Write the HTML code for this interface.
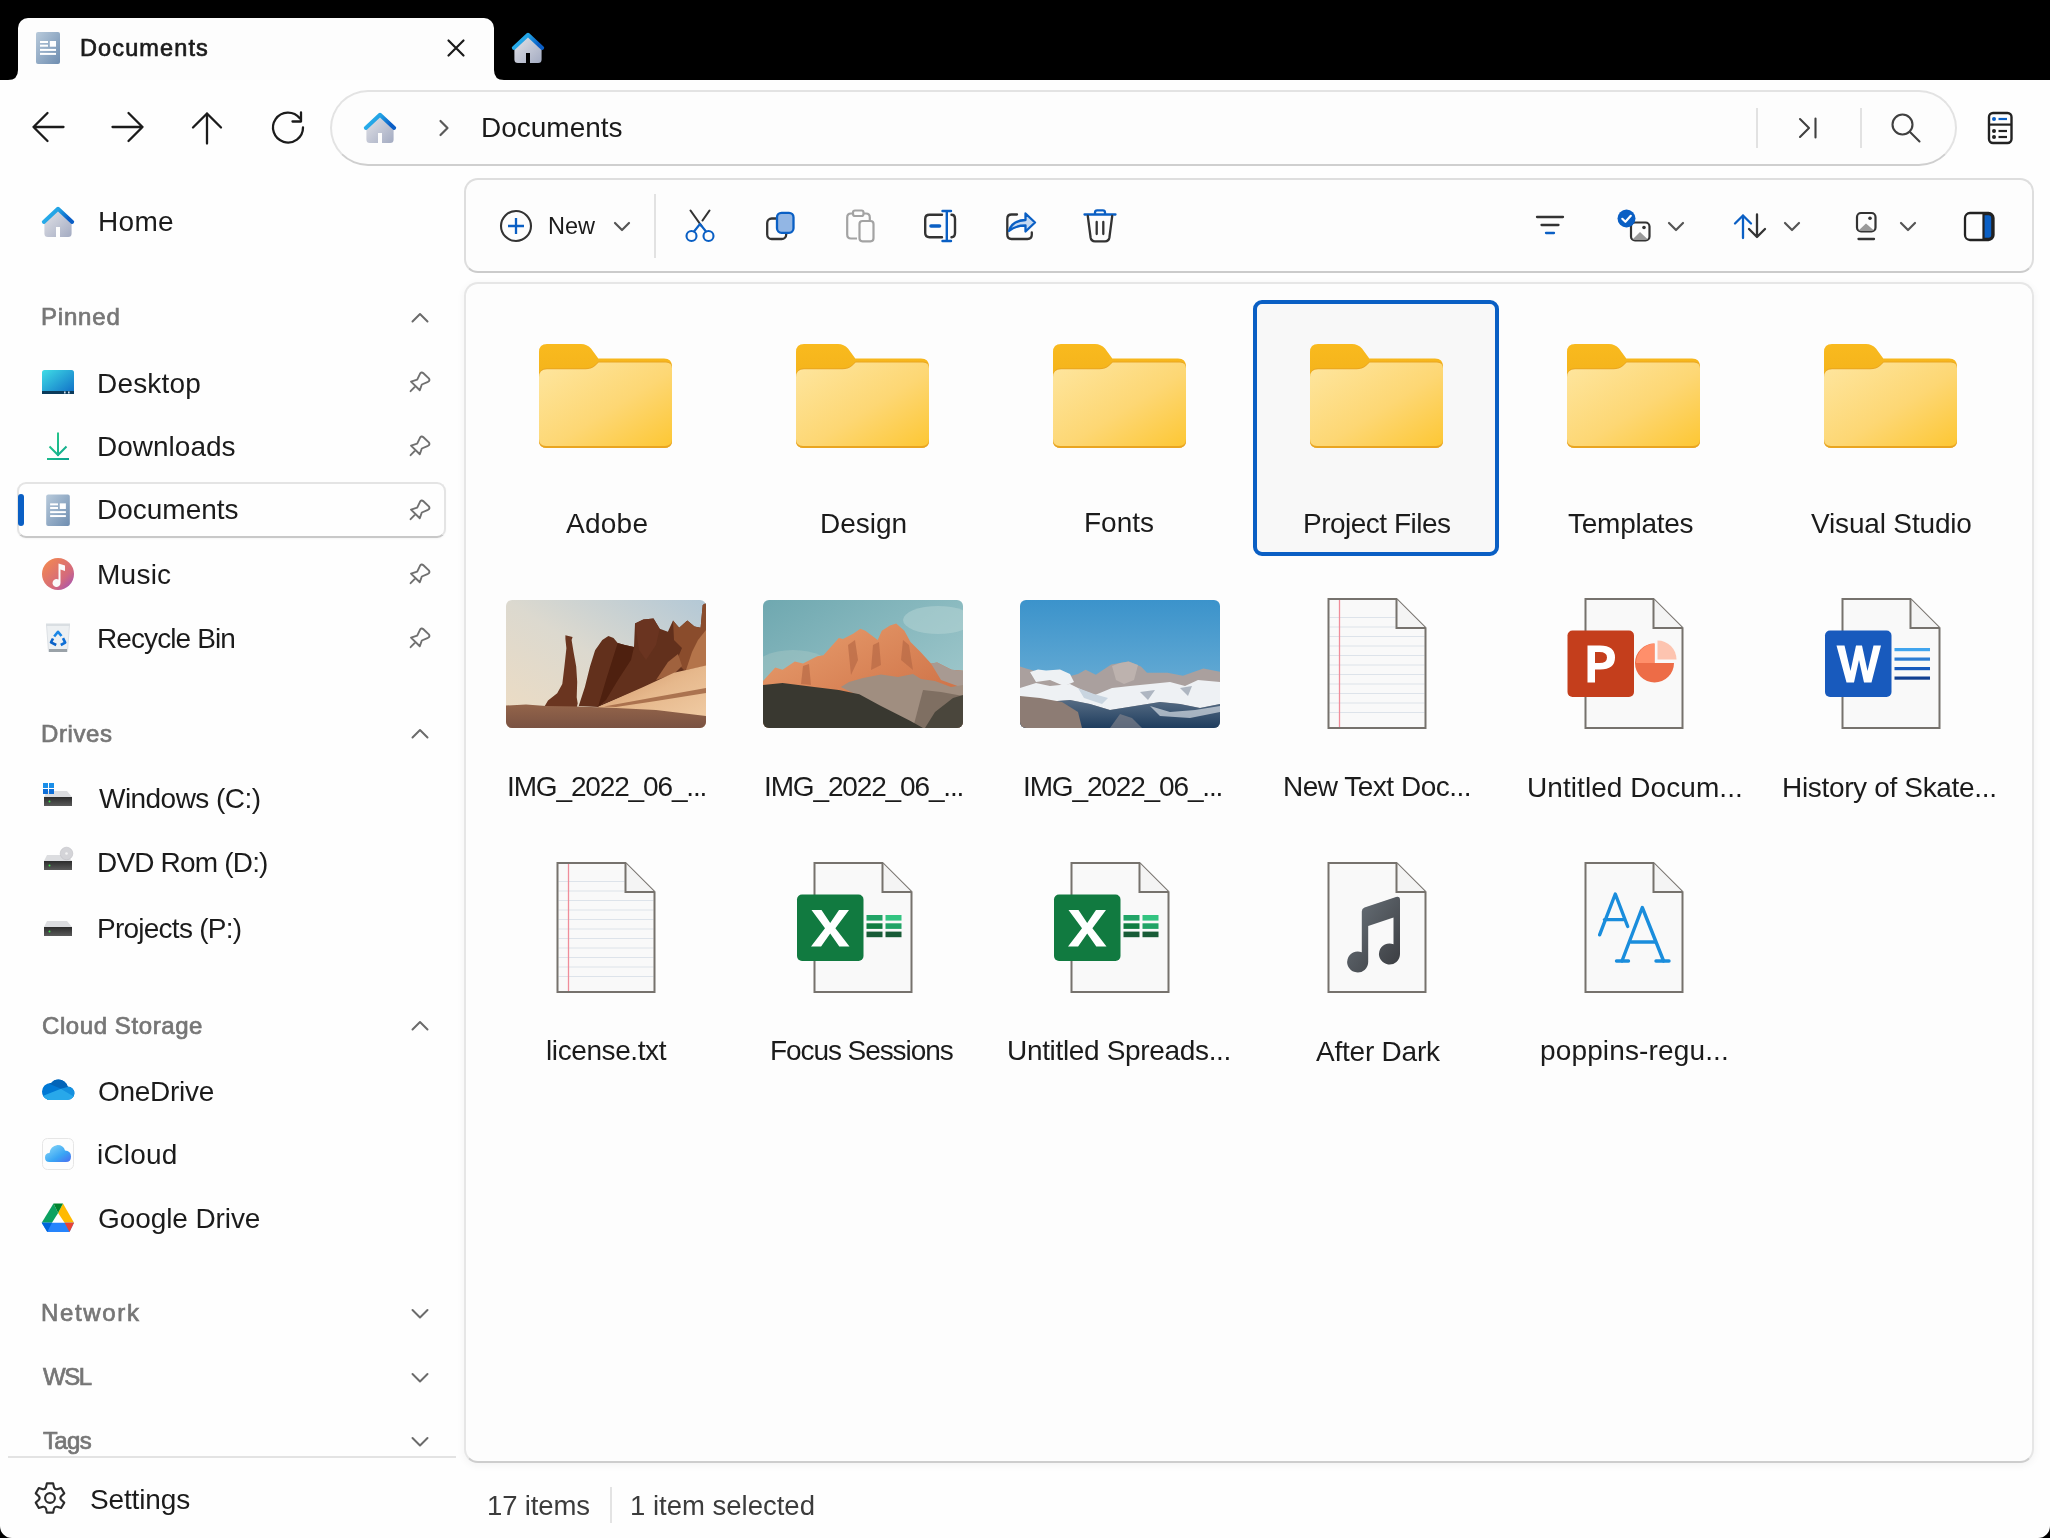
<!DOCTYPE html>
<html><head><meta charset="utf-8">
<style>
*{margin:0;padding:0;box-sizing:border-box}
html,body{width:2050px;height:1538px;overflow:hidden}
body{background:#fefefe;font-family:"Liberation Sans",sans-serif;color:#1b1b1b;position:relative}
.a{position:absolute}
.t{position:absolute;line-height:1;white-space:nowrap;will-change:transform}
svg{position:absolute;overflow:visible}
#topbar{left:0;top:0;width:2050px;height:80px;background:#000}
#tab{left:18px;top:18px;width:476px;height:62px;background:#fdfdfd;border-radius:10px 10px 0 0}
.addr{left:330px;top:90px;width:1627px;height:76px;border-radius:38px;border:2px solid #e3e3e3;border-bottom-color:#cfcfcf;background:#fdfdfd}
.panel{border:2px solid #dedede;border-bottom-color:#cbcbcb;background:#fdfdfd}
#toolbar{left:464px;top:178px;width:1570px;height:95px;border-radius:14px}
#content{left:464px;top:282px;width:1570px;height:1181px;border-radius:14px;border-color:#e6e6e6;border-bottom-color:#cdcdcd;box-shadow:0 2px 8px rgba(0,0,0,0.05)}
.hdr{color:#7a7a7a;font-weight:bold;font-size:23px}
.sb{font-size:27px;color:#1b1b1b}
.lbl{font-size:27px;color:#1b1b1b;text-align:center;width:246px}
.sel{left:1253px;top:300px;width:246px;height:256px;border:4px solid #0a5fc4;border-radius:9px;background:#f8f8f8}
.vsep{width:2px;background:#e3e3e3}
</style></head><body>
<div id="topbar" class="a"></div>
<div id="tab" class="a"></div>
<!-- inverted corners -->
<svg style="left:8px;top:70px" width="10" height="10"><path d="M10,0 V10 H0 Q10,10 10,0Z" fill="#fdfdfd"/></svg>
<svg style="left:494px;top:70px" width="10" height="10"><path d="M0,0 V10 H10 Q0,10 0,0Z" fill="#fdfdfd"/></svg>


<div class="a addr"></div>

<div id="toolbar" class="a panel"></div>

<div id="content" class="a panel"></div>
<div class="a sel"></div>

<!-- sidebar -->
<div class="a" style="left:16.5px;top:482px;width:429px;height:56px;border-radius:9px;border:2px solid #e4e4e4;border-bottom-color:#c8c8c8;background:#fefefe;box-shadow:0 1px 2px rgba(0,0,0,0.04)"></div>
<div class="a" style="left:18px;top:494px;width:6px;height:32px;border-radius:3px;background:#0a5fc4"></div>
<div class="a" style="left:8px;top:1456px;width:448px;height:2px;background:#e3e3e3"></div>

<!-- status -->
<div class="a vsep" style="left:610px;top:1487px;height:36px"></div>

<!-- grid labels -->


<svg id="ov" style="left:0;top:0" width="2050" height="1538" viewBox="0 0 2050 1538">
<defs>
 <linearGradient id="gDoc" x1="0" y1="0" x2="1" y2="1"><stop offset="0" stop-color="#b8cadb"/><stop offset="1" stop-color="#6e8db0"/></linearGradient>
 <linearGradient id="gRoof" x1="0" y1="0" x2="1" y2="0.3"><stop offset="0" stop-color="#2db4ee"/><stop offset="0.5" stop-color="#22a2e4"/><stop offset="1" stop-color="#0a5ec6"/></linearGradient>
 <linearGradient id="gHouse" x1="0" y1="0" x2="1" y2="1"><stop offset="0" stop-color="#e4e4e8"/><stop offset="1" stop-color="#a3abc2"/></linearGradient>
 <symbol id="home" viewBox="0 0 32 30" overflow="visible">
  <path d="M2.4,15.5 L16,3 L29.6,15.5 V26.5 Q29.6,30 26.1,30 H18 V20 H14 V30 H5.9 Q2.4,30 2.4,26.5 Z" fill="url(#gHouse)"/>
  <path d="M1.8,15 L16,1.8 L30.2,15" fill="none" stroke="url(#gRoof)" stroke-width="3.9" stroke-linecap="round" stroke-linejoin="round"/>
 </symbol>
 <symbol id="docico" viewBox="0 0 24 32" overflow="visible">
  <rect x="0" y="0" width="24" height="32" rx="2" fill="url(#gDoc)"/>
  <g fill="#fff"><rect x="4" y="9" width="8" height="2"/><rect x="4" y="12.7" width="8" height="2"/><rect x="13.8" y="9" width="6.2" height="5.7"/><rect x="4" y="16.9" width="16" height="2"/><rect x="4" y="20.9" width="16" height="2"/></g>
 </symbol>
 <symbol id="pin" viewBox="0 0 20 20" overflow="visible">
  <path d="M1,9.6 L7.2,7.6 L10,1.8 Q11.4,-0.6 13.4,1.2 L18.8,6.4 Q20.4,8.4 18,9.8 L11.8,12.5 L9.8,18.3 Z M5.3,14.4 L0.6,19.2" fill="none" stroke="#707070" stroke-width="1.9" stroke-linejoin="round" stroke-linecap="round"/>
 </symbol>
</defs>
<!-- tab -->
<use href="#docico" x="36" y="32" width="24" height="32"/>
<path d="M448.5,40.5 L463.5,55.5 M463.5,40.5 L448.5,55.5" stroke="#1b1b1b" stroke-width="2.2" stroke-linecap="round"/>
<use href="#home" x="512" y="33" width="32" height="30"/>
<!-- nav -->
<g fill="none" stroke="#1b1b1b" stroke-width="2.3" stroke-linecap="round" stroke-linejoin="round">
 <path d="M33.5,127 H63.5 M47.5,113 L33.5,127 L47.5,141"/>
 <path d="M112.5,127 H142.5 M128.5,113 L142.5,127 L128.5,141"/>
 <path d="M207,113.5 V143.5 M193,127.5 L207,113.5 L221,127.5"/>
 <path d="M303,127.5 A15,15 0 1 1 299.8,118.3 M301,112.5 V121.5 H292.5"/>
</g>
<!-- address -->
<use href="#home" x="364" y="113" width="32" height="30"/>
<path d="M440.5,121 L447.5,128 L440.5,135" fill="none" stroke="#5a5a5a" stroke-width="2.2" stroke-linecap="round" stroke-linejoin="round"/>
<rect x="1756" y="108" width="2" height="40" fill="#e2e2e2"/>
<rect x="1860" y="108" width="2" height="40" fill="#e2e2e2"/>
<g fill="none" stroke="#404040" stroke-width="2.1" stroke-linecap="round" stroke-linejoin="round">
 <path d="M1800,119 L1809,128 L1800,137 M1815.5,118.5 V137.5"/>
 <circle cx="1902.5" cy="124.5" r="10"/>
 <path d="M1910,132 L1919.5,141.5"/>
</g>
<g>
 <rect x="1989" y="113" width="22.5" height="30" rx="4" fill="none" stroke="#222" stroke-width="2.4"/>
 <path d="M1989,124.6 H2011.5" stroke="#222" stroke-width="2.2"/>
 <circle cx="1994" cy="119" r="2" fill="#0a5fc4"/><path d="M1998.5,119 H2007" stroke="#0a5fc4" stroke-width="2.2"/>
 <circle cx="1994" cy="131" r="2" fill="#222"/><path d="M1998.5,131 H2007" stroke="#222" stroke-width="2.2"/>
 <circle cx="1994" cy="137" r="2" fill="#222"/><path d="M1998.5,137 H2007" stroke="#222" stroke-width="2.2"/>
</g>
<!-- toolbar -->
<circle cx="516" cy="226" r="15" fill="none" stroke="#333" stroke-width="2.1"/>
<path d="M516,218 V234 M508,226 H524" stroke="#0a5fc4" stroke-width="2.3"/>
<g fill="none" stroke="#555" stroke-width="2.2" stroke-linecap="round" stroke-linejoin="round">
 <path d="M615,223 L622,230 L629,223"/>
 <path d="M1669,223 L1676,230 L1683,223"/>
 <path d="M1785,223 L1792,230 L1799,223"/>
 <path d="M1901,223 L1908,230 L1915,223"/>
</g>
<rect x="654" y="194" width="2" height="64" fill="#e2e2e2"/>
<!-- scissors -->
<g fill="none" stroke-width="2.1" stroke-linecap="round">
 <path d="M690.5,210.5 L701.5,226" stroke="#333"/>
 <path d="M709.5,210.5 L702.5,220.5" stroke="#333"/>
 <path d="M700,224 L706,231.5 M700,224 L694,231.5" stroke="#0a5fc4"/>
 <circle cx="691.5" cy="236" r="5" stroke="#0a5fc4"/>
 <circle cx="708.5" cy="236" r="5" stroke="#0a5fc4"/>
</g>
<!-- copy -->
<rect x="767.2" y="218.5" width="19" height="20.5" rx="4.5" fill="none" stroke="#333" stroke-width="2.3"/>
<rect x="777" y="212.8" width="16.5" height="20" rx="4.5" fill="#92b6e4" stroke="#0a5fc4" stroke-width="2.3"/>
<!-- paste -->
<g fill="none" stroke="#a3a3a3" stroke-width="2.2" stroke-linejoin="round">
 <path d="M857,238.5 H851 Q847.2,238.5 847.2,234.5 V217.5 Q847.2,213.5 851,213.5 H853 M863.5,213.5 H866 Q869.8,213.5 869.8,217.5 V220.5"/>
 <rect x="853" y="210.5" width="10.5" height="5.5" rx="2"/>
 <rect x="859.5" y="221" width="14" height="20.3" rx="3"/>
</g>
<!-- rename -->
<g fill="none" stroke-width="2.4" stroke-linecap="round">
 <path d="M942,214.8 H929.5 Q925.2,214.8 925.2,219 V233 Q925.2,237.2 929.5,237.2 H942 M951.5,214.8 Q955,214.8 955,219 V233 Q955,237.2 951.5,237.2" stroke="#333"/>
 <path d="M946.8,211 V241 M942.5,211 H951 M942.5,241 H951" stroke="#0a5fc4"/>
 <path d="M931,226 H939.5" stroke="#0a5fc4" stroke-width="3.6"/>
</g>
<!-- share -->
<g fill="none" stroke-width="2.3" stroke-linejoin="round" stroke-linecap="round">
 <path d="M1017,214.5 H1011.5 Q1007.3,214.5 1007.3,218.8 V234.8 Q1007.3,239 1011.5,239 H1027.5 Q1031.8,239 1031.8,234.8 V232.5" stroke="#333"/>
 <path d="M1009,231 Q1012,220.5 1025.5,220 V213.5 L1035,222.5 L1025.5,231.5 V225.5 Q1015,225.5 1009,231 Z" fill="#c6d9f1" stroke="#0a5fc4"/>
</g>
<!-- delete -->
<g fill="none" stroke-width="2.3" stroke-linecap="round" stroke-linejoin="round">
 <path d="M1084.5,214.5 H1115.5 M1095,214 V212.5 Q1095,210.3 1097.2,210.3 H1102.8 Q1105,210.3 1105,212.5 V214" stroke="#0a5fc4"/>
 <path d="M1087.8,216 L1090.6,237.5 Q1091.2,241.3 1095,241.3 H1105 Q1108.8,241.3 1109.4,237.5 L1112.2,216 M1096.7,222 V234 M1103.3,222 V234" stroke="#333"/>
</g>
<!-- filter -->
<g stroke-width="2.3" stroke-linecap="round">
 <path d="M1537,217 H1563 M1541.5,225 H1558.5" stroke="#333"/>
 <path d="M1546,233 H1554" stroke="#0a5fc4"/>
</g>
<!-- select -->
<g>
 <rect x="1631" y="222.5" width="18.5" height="18" rx="4" fill="#fdfdfd" stroke="#333" stroke-width="2.2"/>
 <path d="M1632.5,239.5 L1640,232 L1648,239.5 Z" fill="#9a9a9a"/>
 <circle cx="1644" cy="227.5" r="1.8" fill="#333"/>
 <circle cx="1626.5" cy="218.5" r="9" fill="#0a5fc4"/>
 <path d="M1622.3,218.8 L1625.4,221.8 L1630.8,215.8" fill="none" stroke="#fff" stroke-width="2.2" stroke-linecap="round" stroke-linejoin="round"/>
</g>
<!-- sort -->
<g fill="none" stroke-width="2.3" stroke-linecap="round" stroke-linejoin="round">
 <path d="M1743,238 V215.5 M1735,223.5 L1743,215.5 L1751,223.5" stroke="#0a5fc4"/>
 <path d="M1757,214.5 V237 M1749,229 L1757,237 L1765,229" stroke="#333"/>
</g>
<!-- layout -->
<g>
 <rect x="1857" y="213" width="18.5" height="18.5" rx="4" fill="none" stroke="#333" stroke-width="2.2"/>
 <path d="M1858.5,230.5 L1866,223.5 L1874,230.5 Z" fill="#9a9a9a"/>
 <circle cx="1870" cy="218.2" r="1.8" fill="#333"/>
 <path d="M1858.5,239 H1874" stroke="#333" stroke-width="2.3" stroke-linecap="round"/>
</g>
<!-- pane -->
<g>
 <rect x="1965" y="213" width="28.5" height="27" rx="5" fill="none" stroke="#222" stroke-width="2.3"/>
 <path d="M1983.5,214.2 H1988.5 Q1992.3,214.2 1992.3,218 V235 Q1992.3,238.8 1988.5,238.8 H1983.5 Z" fill="#0a5fc4" stroke="#222" stroke-width="2.2"/>
</g>
</svg>


<svg id="side" style="left:0;top:0" width="2050" height="1538" viewBox="0 0 2050 1538">
<defs>
 <linearGradient id="gDesk" x1="0" y1="0" x2="1" y2="1"><stop offset="0" stop-color="#3fdde6"/><stop offset="1" stop-color="#0f6cc6"/></linearGradient>
 <linearGradient id="gDl" x1="0" y1="0" x2="1" y2="1"><stop offset="0" stop-color="#2fd08a"/><stop offset="1" stop-color="#0aa38e"/></linearGradient>
 <linearGradient id="gMus" x1="0" y1="0" x2="1" y2="1"><stop offset="0" stop-color="#f78c4a"/><stop offset="0.65" stop-color="#d46a7c"/><stop offset="1" stop-color="#9a4fc0"/></linearGradient>
 <linearGradient id="gDrive" x1="0" y1="0" x2="0" y2="1"><stop offset="0" stop-color="#2c2c2c"/><stop offset="1" stop-color="#5a5a5a"/></linearGradient>
 <linearGradient id="gICl" x1="0" y1="0" x2="1" y2="1"><stop offset="0" stop-color="#8fdcf8"/><stop offset="0.6" stop-color="#3aa6f4"/><stop offset="1" stop-color="#4a6cf0"/></linearGradient>
</defs>
<use href="#home" x="42" y="207" width="32" height="30"/>
<!-- chevrons up -->
<g fill="none" stroke="#6b6b6b" stroke-width="2" stroke-linecap="round" stroke-linejoin="round">
 <path d="M412.5,321.5 L420,314 L427.5,321.5"/>
 <path d="M412.5,737.5 L420,730 L427.5,737.5"/>
 <path d="M412.5,1029.5 L420,1022 L427.5,1029.5"/>
 <path d="M412.5,1310 L420,1317.5 L427.5,1310"/>
 <path d="M412.5,1374 L420,1381.5 L427.5,1374"/>
 <path d="M412.5,1438 L420,1445.5 L427.5,1438"/>
</g>
<!-- pins -->
<use href="#pin" x="410" y="372" width="20" height="20"/>
<use href="#pin" x="410" y="436" width="20" height="20"/>
<use href="#pin" x="410" y="500" width="20" height="20"/>
<use href="#pin" x="410" y="564" width="20" height="20"/>
<use href="#pin" x="410" y="628" width="20" height="20"/>
<!-- desktop -->
<rect x="42" y="370" width="32" height="24" rx="2.5" fill="url(#gDesk)"/>
<rect x="42" y="391" width="32" height="3" fill="#0b3a5a"/>
<rect x="64" y="391.5" width="1.6" height="2" fill="#cde"/><rect x="68" y="391.5" width="1.6" height="2" fill="#cde"/>
<!-- downloads -->
<path d="M58,432.5 V456 M49.5,446.5 L58,455 L66.5,446.5 M47,459 H69" fill="none" stroke="url(#gDl)" stroke-width="2"/>
<!-- documents -->
<use href="#docico" x="46" y="494.5" width="24" height="31.5"/>
<!-- music -->
<circle cx="58" cy="574" r="16" fill="url(#gMus)"/>
<path d="M58.5,563.5 L65,565.5 V571 L60.5,569.5 V583 A4,4 0 1 1 58.5,579.6 Z" fill="#fafafa"/>
<!-- recycle -->
<path d="M46.5,625 H69.5 L67.5,651.5 H48.5 Z" fill="#edf0f2" stroke="#d5dbdf" stroke-width="0.8"/><path d="M46,623.5 H70 V626 H46 Z" fill="#d9dee2"/>
<rect x="49" y="649" width="18" height="3" fill="#9aa2a8"/>
<path d="M54.2,636.5 L58,631.8 L61.5,636" fill="none" stroke="#1a86e6" stroke-width="2.6" stroke-linejoin="round"/>
<path d="M63,638.2 L65.2,642.6 L60.8,645" fill="none" stroke="#0f6fd6" stroke-width="2.6" stroke-linejoin="round"/>
<path d="M56.2,645 L51,642.4 L53,638.5" fill="none" stroke="#0b62c8" stroke-width="2.6" stroke-linejoin="round"/>
<!-- drives -->
<g>
 <path d="M47,791 H67 L72,797 H44 Z" fill="#dcdde0"/>
 <rect x="44" y="797" width="28" height="9" fill="url(#gDrive)"/>
 <circle cx="49.5" cy="801.5" r="1" fill="#3de04a"/>
 <rect x="43" y="783" width="5" height="5" fill="#1a8ee8"/><rect x="49" y="783" width="5" height="5" fill="#1a8ee8"/>
 <rect x="43" y="789" width="5" height="5" fill="#0f6fd8"/><rect x="49" y="789" width="5" height="5" fill="#0f6fd8"/>
</g>
<g>
 <path d="M47,855 H67 L72,861 H44 Z" fill="#dcdde0"/>
 <rect x="44" y="861" width="28" height="9" fill="url(#gDrive)"/>
 <circle cx="49.5" cy="865.5" r="1" fill="#3de04a"/>
 <circle cx="66.5" cy="853.5" r="6.3" fill="#d4d4d8" stroke="#c0c0c4" stroke-width="0.6"/><circle cx="66.5" cy="853.5" r="1.3" fill="#f4f4f4"/>
</g>
<g>
 <path d="M47,921 H67 L72,927 H44 Z" fill="#dcdde0"/>
 <rect x="44" y="927" width="28" height="9" fill="url(#gDrive)"/>
 <circle cx="49.5" cy="931.5" r="1" fill="#3de04a"/>
</g>
<!-- onedrive -->
<defs><clipPath id="cpOD"><circle cx="50.6" cy="1091.5" r="8.6"/><circle cx="58.5" cy="1089" r="9.5"/><circle cx="67.8" cy="1093.2" r="6.6"/><rect x="47" y="1092" width="21" height="8"/></clipPath></defs>
<g clip-path="url(#cpOD)">
 <rect x="40" y="1076" width="36" height="26" fill="#0078d4"/>
 <path d="M49.8,1084 L61,1088.7 L67.8,1086.9 V1074 H45 Z" fill="#0364b8"/>
 <path d="M61,1088.7 L67.8,1086.9 L80,1085 V1097 L72.5,1096.3 Z" fill="#1490df"/>
 <path d="M36,1098.5 L61,1088.7 L78,1099 V1104 H36 Z" fill="#28a8ea"/>
</g>
<!-- icloud -->
<rect x="42.5" y="1138.5" width="31" height="31" rx="5" fill="#fdfdfd" stroke="#e6e6e6" stroke-width="1"/>
<path d="M49.5,1162 Q45,1162 45,1157.5 Q45,1153 49.5,1153 Q50.5,1146 57.5,1145 Q63.5,1145 65,1150.5 Q71,1151 71,1156.5 Q71,1162 66,1162 Z" fill="url(#gICl)"/>
<!-- gdrive -->
<path d="M53.5,1203.5 L58.1,1213 L52,1222.7 H41.7 Z" fill="#0ba160"/>
<path d="M63,1203.5 L74,1222.7 H64.6 L58.1,1213 Z" fill="#ffba00"/>
<path d="M53.5,1203.5 H63 L58.1,1213 Z" fill="#00832d"/>
<path d="M41.7,1222.7 H74 L69.5,1231.9 H47.3 Z" fill="#2684fc"/>
<path d="M41.7,1222.7 H52 L47.3,1231.9 Z" fill="#0066da"/>
<path d="M64.6,1222.7 H74 L69.5,1231.9 Z" fill="#ea4335"/>
<!-- settings gear -->
<g>
 <path d="M45.95,1487.45 L46.88,1483.33 L53.12,1483.33 L54.05,1487.45 Q54.80,1489.69 57.11,1489.22 L61.15,1487.96 L64.27,1493.36 L61.16,1496.23 Q59.60,1498.00 61.16,1499.77 L64.27,1502.64 L61.15,1508.04 L57.11,1506.78 Q54.80,1506.31 54.05,1508.55 L53.12,1512.67 L46.88,1512.67 L45.95,1508.55 Q45.20,1506.31 42.89,1506.78 L38.85,1508.04 L35.73,1502.64 L38.84,1499.77 Q40.40,1498.00 38.84,1496.23 L35.73,1493.36 L38.85,1487.96 L42.89,1489.22 Q45.20,1489.69 45.95,1487.45 Z" fill="none" stroke="#2b2b2b" stroke-width="2.1" stroke-linejoin="round"/>
 <circle cx="50" cy="1498" r="4.9" fill="none" stroke="#2b2b2b" stroke-width="2.1"/>
</g>
</svg>


<svg id="grid" style="left:0;top:0" width="2050" height="1538" viewBox="0 0 2050 1538">
<defs>
 <linearGradient id="gFB" x1="0" y1="0" x2="0" y2="1"><stop offset="0" stop-color="#f9ba1e"/><stop offset="1" stop-color="#e9a416"/></linearGradient>
 <linearGradient id="gFF" x1="0" y1="0" x2="1" y2="1"><stop offset="0" stop-color="#fee6a0"/><stop offset="0.55" stop-color="#fdd774"/><stop offset="1" stop-color="#fdc734"/></linearGradient>
 <symbol id="folder" viewBox="0 0 133 104" overflow="visible">
  <path d="M0,8 Q0,0 8,0 H42 Q48,0 52,4.5 L59.3,14.4 H125 Q133,14.4 133,22.4 V96 Q133,104 125,104 H8 Q0,104 0,96 Z" fill="url(#gFB)"/>
  <path d="M0,32.2 Q0,24.2 8,24.2 H46.6 Q52,24.2 56,21 L59.6,17.6 H127 Q133,17.6 133,23.6 V96.5 Q133,104 125.5,104 H7.5 Q0,104 0,96.5 Z" fill="#e9a521"/>
  <path d="M0,33.2 Q0,25.2 8,25.2 H46.6 Q52,25.2 56,22 L59.6,18.6 H127 Q133,18.6 133,24.6 V95 Q133,102 126,102 H7 Q0,102 0,95 Z" fill="url(#gFF)"/>
 </symbol>
 <symbol id="page" viewBox="0 0 99 131" overflow="visible">
  <path d="M1,1 H69 L98,30 V130 H1 Z" fill="#f9f9f9" stroke="#76726d" stroke-width="2"/>
  <path d="M69,1 V30 H98" fill="#f4f4f4" stroke="#76726d" stroke-width="2" stroke-linejoin="miter"/>
 </symbol>
 <symbol id="txtpage" viewBox="0 0 99 131" overflow="visible">
  <path d="M1,1 H69 L98,30 V130 H1 Z" fill="#f9f9f9"/>
  <g stroke="#dde3ea" stroke-width="1.2">
   <path d="M2,19.5 H68 M2,29 H68 M2,38.5 H97 M2,48 H97 M2,57.5 H97 M2,67 H97 M2,76.5 H97 M2,86 H97 M2,95.5 H97 M2,105 H97 M2,114.5 H97"/>
  </g>
  <path d="M12,2 V129" stroke="#ef8d9a" stroke-width="1.3"/>
  <path d="M1,1 H69 L98,30 V130 H1 Z" fill="none" stroke="#76726d" stroke-width="2"/>
  <path d="M69,1 V30 H98" fill="#f4f4f4" stroke="#76726d" stroke-width="2"/>
 </symbol>
 <symbol id="xls" viewBox="0 0 116 131" overflow="visible">
  <use href="#page" x="16.5" y="0" width="99" height="131"/>
  <rect x="0" y="32.5" width="66.5" height="66.5" rx="5" fill="#117a40"/>
  <path d="M14.5,48 H24.5 L33.2,61 L42,48 H52 L38.4,66.2 L52.5,84.5 H42.3 L33.2,71.4 L24.1,84.5 H14 L28,66.2 Z" fill="#fff"/>
  <rect x="69.5" y="53" width="16" height="5.6" fill="#21a366"/><rect x="88.5" y="53" width="16" height="5.6" fill="#33c481"/>
  <rect x="69.5" y="61.3" width="16" height="5.6" fill="#107c41"/><rect x="88.5" y="61.3" width="16" height="5.6" fill="#21a366"/>
  <rect x="69.5" y="69.6" width="16" height="5.6" fill="#185c37"/><rect x="88.5" y="69.6" width="16" height="5.6" fill="#185c37"/>
 </symbol>
</defs>
<use href="#folder" x="539" y="344" width="133" height="104"/>
<use href="#folder" x="796" y="344" width="133" height="104"/>
<use href="#folder" x="1053" y="344" width="133" height="104"/>
<use href="#folder" x="1310" y="344" width="133" height="104"/>
<use href="#folder" x="1567" y="344" width="133" height="104"/>
<use href="#folder" x="1824" y="344" width="133" height="104"/>

<!-- photos -->
<defs>
 <clipPath id="cp1"><rect x="0" y="0" width="200" height="128" rx="6"/></clipPath>
 <linearGradient id="gSky1" x1="0" y1="1" x2="1" y2="0"><stop offset="0" stop-color="#eedcc2"/><stop offset="0.5" stop-color="#dcd9cf"/><stop offset="1" stop-color="#b3c8d6"/></linearGradient>
 <linearGradient id="gRock1" x1="0" y1="0" x2="1" y2="0"><stop offset="0" stop-color="#5a2616"/><stop offset="0.6" stop-color="#63301c"/><stop offset="1" stop-color="#9a5a36"/></linearGradient>
 <linearGradient id="gSand1" x1="0" y1="0" x2="1" y2="1"><stop offset="0" stop-color="#c8885a"/><stop offset="0.5" stop-color="#e6b88c"/><stop offset="1" stop-color="#f2cfa8"/></linearGradient>
 <linearGradient id="gGround1" x1="0" y1="0" x2="0" y2="1"><stop offset="0" stop-color="#93644a"/><stop offset="1" stop-color="#7a5242"/></linearGradient>
 <linearGradient id="gSky2" x1="0" y1="0" x2="1" y2="1"><stop offset="0" stop-color="#6fa8b0"/><stop offset="1" stop-color="#a7cdd0"/></linearGradient>
 <linearGradient id="gOr2" x1="0" y1="0" x2="1" y2="1"><stop offset="0" stop-color="#e9a070"/><stop offset="1" stop-color="#c9683e"/></linearGradient>
 <linearGradient id="gSky3" x1="0" y1="0" x2="0" y2="1"><stop offset="0" stop-color="#3b93cb"/><stop offset="1" stop-color="#7ab6d8"/></linearGradient>
 <linearGradient id="gBot3" x1="0" y1="0" x2="0" y2="1"><stop offset="0" stop-color="#5a6f86"/><stop offset="1" stop-color="#1f3d5e"/></linearGradient>
</defs>
<g transform="translate(506,600)" clip-path="url(#cp1)">
 <rect width="200" height="128" fill="url(#gSky1)"/>
 <path d="M72.7,106 L78.9,87 L84,66.6 L89.1,50.2 L96.3,40 L102.4,35.9 L107.5,37.9 L111.7,43 L118.8,45.1 L128,47.1 L129,23.6 L137.3,19.5 L147.5,18.4 L153.7,28.7 L161.9,31.8 L167,20.5 L173.2,27.7 L181.3,20.5 L188.5,26.6 L194.6,27.7 L196.7,5.1 L200,3 V68 L168,74 L137,88 L92,107 Z" fill="#62301c"/>
 <path d="M129,23.6 L137.3,19.5 L147.5,18.4 L153.7,28.7 L150,45 L140,60 L133,50 Z" fill="#6a3420"/>
 <path d="M167,20.5 L173.2,27.7 L181.3,20.5 L188.5,26.6 L194.6,27.7 L196.7,5.1 L200,3 V68 L178,70 L170,62 L176,48 L168,40 Z" fill="#8a4c2c"/>
 <path d="M180,70 L186,52 L192,40 L200,30 V66 Z" fill="#b4744a"/>
 <path d="M150,80 L162,62 L172,54 L176,66 L168,74 Z" fill="#a0623e"/>
 <path d="M111.7,43 L118.8,45.1 L128,47.1 L125,60 L112,80 L100,100 L92,107 L100,80 Z" fill="#4e200f"/>
 <path fill-opacity="1" d="M59.4,35.3 L66.6,36.9 L65.6,40 L67.6,52.2 L70.2,66.6 L71.2,82 L70.7,97.3 L71.7,103.5 L70.7,107.6 L37.9,107.6 L42,100.4 L51.2,93.2 L56.3,84 L58.4,66.6 L60.4,48.2 L59.4,38.9 Z" fill="#6a3520"/>
 <path d="M92,107 L137.3,87 L168,72.7 L200,65.6 V128 H80 Z" fill="url(#gSand1)"/>
 <path d="M98,106.5 L150,97 L200,88 V93 L150,101 L110,107 Z" fill="#a46a48" opacity="0.9"/>
 <path d="M0,105.5 L20,104.5 L40,106 L72,106.5 L110,108 L150,110 L200,116 V128 H0 Z" fill="url(#gGround1)"/>
</g>
<g transform="translate(763,600)" clip-path="url(#cp1)">
 <rect width="200" height="128" fill="url(#gSky2)"/>
 <ellipse cx="30" cy="70" rx="40" ry="20" fill="#a9c8c6" opacity="0.45"/>
 <ellipse cx="175" cy="20" rx="35" ry="14" fill="#b8d6d6" opacity="0.5"/>
 <path d="M0,81 L12.3,67.6 L19.5,69.7 L31.8,61.5 L40,63.5 L54.3,56.3 L60.4,55.3 L75.8,37.9 L79.9,38.9 L90.1,33.8 L97.3,28.7 L102.4,30.7 L114.7,39.9 L118.8,30.7 L127,25.6 L133.2,23.6 L141.4,30.7 L147.5,42 L157.8,52.2 L168,63.5 L174.2,62.5 L188.5,69.7 L200,70.7 V128 H0 Z" fill="url(#gOr2)"/>
 <path d="M85,45 L92,40 L95,60 L88,75 Z M110,45 L116,42 L118,65 L108,70 Z M140,40 L146,45 L150,70 L138,60 Z M40,66 L46,64 L48,85 L38,84 Z" fill="#b86a46" opacity="0.7"/>
 <path d="M168,63.5 L174.2,62.5 L188.5,69.7 L200,70.7 V88 L178,80 Z" fill="#a89a92"/>
 <path d="M77.9,87 L86,82 L100,78 L118,74.5 L135,77 L150,74 L158,79 L172,81 L188,87 L200,85 V128 H140 L96,96 Z" fill="#a08e80"/>
 <path d="M160,90 L178,92 L200,96 V128 H150 Z" fill="#7f6f62"/>
 <path d="M0,85 L19.5,83 L51.2,87 L75.8,90 L96.3,94.3 L117,105.5 L147.5,121 L160,128 H0 Z" fill="#393830"/>
 <path d="M162,128 L172,112 L190,98 L200,95 V128 Z" fill="#4a463c"/>
</g>
<g transform="translate(1020,600)" clip-path="url(#cp1)">
 <rect width="200" height="128" fill="url(#gSky3)"/>
 <path d="M0,66.6 L6.1,68.6 L14.3,70.7 L24.6,71.7 L40,69.7 L51.2,75.8 L58,74 L65.6,69.7 L75.8,74.8 L91.2,64.5 L108.6,61.5 L120.9,66.6 L127,72.7 L147.5,72.7 L162.9,75.8 L183.4,68.6 L200,71.7 V128 H0 Z" fill="#aaa09e"/>
 <path d="M92,66 L100,63 L108.6,61.5 L118,65 L114,80 L104,84 L96,80 Z" fill="#bdb2ae"/>
 <path d="M10,72 L18,69.5 L26,70.5 L40,69.5 L50,74 L54,82 L44,86 L30,80 L16,82 Z" fill="#eef1f4"/>
 <path d="M0,88 L16,83 L30,86 L50,84 L62,90 L75,95 L92,88 L110,86 L130,84 L150,82 L165,86 L178,80 L200,82 V104 L180,108 L160,104 L140,102 L115,106 L90,110 L70,104 L50,100 L25,102 L0,98 Z" fill="#eef1f4"/>
 <path d="M58,88 L74,94 L88,98 L82,104 L64,98 Z" fill="#c9d5e0"/>
 <path d="M120,92 L135,90 L128,100 Z M160,88 L172,86 L168,96 Z" fill="#9ea8b4" opacity="0.8"/>
 <path d="M0,98 L25,102 L50,100 L70,104 L90,110 L115,106 L140,102 L160,104 L180,108 L200,104 V128 H0 Z" fill="url(#gBot3)"/>
 <path d="M0,96 L20,98 L42,102 L58,112 L62,128 H0 Z" fill="#8d7c74"/>
 <path d="M130,106 L150,112 L175,110 L200,106 V112 L170,118 L140,116 Z" fill="#d6dde4" opacity="0.7"/>
 <path d="M90,128 L100,114 L112,118 L122,128 Z" fill="#8a8890" opacity="0.6"/>
</g>
<!-- docs row 2 -->
<use href="#txtpage" x="1327.5" y="598" width="99" height="131"/>
<use href="#page" x="1584.5" y="598" width="99" height="131"/>
<rect x="1567.5" y="630.5" width="66.5" height="66.5" rx="5" fill="#c43e1c"/>
<path d="M1587.5,645.5 H1600 Q1615,645.5 1615,657.5 Q1615,669.5 1600,669.5 H1595 V682.5 H1587.5 Z M1595,652 V663 H1599.5 Q1607,663 1607,657.5 Q1607,652 1599.5,652 Z" fill="#fff" fill-rule="evenodd"/>
<path d="M1657.5,640.5 A19,19 0 0 1 1676.5,659.5 H1657.5 Z" fill="#fdc4b0"/>
<path d="M1654.5,643.5 V663 H1674 A19.5,19.5 0 1 1 1654.5,643.5 Z" fill="#ed6c47"/>
<path d="M1654.5,643.5 V663 H1636 A19.5,19.5 0 0 1 1654.5,643.5 Z" fill="#ff8f6b"/>
<use href="#page" x="1841.5" y="598" width="99" height="131"/>
<rect x="1825" y="630.5" width="66.5" height="66.5" rx="5" fill="#185abd"/>
<path d="M1836.5,645.5 H1844.5 L1850.5,671 L1856,645.5 H1862 L1867.5,671 L1873.5,645.5 H1881 L1871.5,682.5 H1864 L1859,660 L1854,682.5 H1846.5 Z" fill="#fff"/>
<rect x="1894.5" y="648" width="35.5" height="3.2" fill="#41a5ee"/>
<rect x="1894.5" y="657.5" width="35.5" height="3.2" fill="#2b7cd3"/>
<rect x="1894.5" y="667" width="35.5" height="3.2" fill="#185abd"/>
<rect x="1894.5" y="676.5" width="35.5" height="3.2" fill="#103f91"/>
<!-- row 3 -->
<use href="#txtpage" x="556.5" y="862" width="99" height="131"/>
<use href="#xls" x="797" y="862" width="116" height="131"/>
<use href="#xls" x="1054" y="862" width="116" height="131"/>
<use href="#page" x="1327.5" y="862" width="99" height="131"/>
<defs><linearGradient id="gNote" x1="0" y1="0" x2="1" y2="1"><stop offset="0" stop-color="#6c757d"/><stop offset="1" stop-color="#393b3f"/></linearGradient></defs>
<path d="M1361.8,911.5 Q1361.8,908.5 1364.5,907.5 L1396,897 Q1400,896 1400,900 V954 A10.5,10.5 0 1 1 1393.5,944.3 V917.5 L1368.2,926 V962 A10.5,10.5 0 1 1 1361.8,952.3 Z" fill="url(#gNote)"/>
<use href="#page" x="1584.5" y="862" width="99" height="131"/>
<g fill="none" stroke="#1a8ddc" stroke-width="3.4" stroke-linecap="round" stroke-linejoin="round">
 <path d="M1599.6,934.8 L1615.3,894 L1627.7,926.5"/>
 <path d="M1604.5,919.6 H1623.5"/>
 <path d="M1622,961 L1642.3,907.5 L1663.6,961"/>
 <path d="M1631,942 H1655"/>
 <path d="M1616.5,961 H1628.5 M1656,961 H1669"/>
</g>
</svg>

<div class="t" style="left:79.90px;top:36.70px;font-size:23.5px;color:#1b1b1b;font-weight:normal;letter-spacing:1.125px;-webkit-text-stroke:0.7px #1b1b1b">Documents</div>
<div class="t" style="left:481.00px;top:114.20px;font-size:28px;color:#1b1b1b;font-weight:normal;letter-spacing:0.000px">Documents</div>
<div class="t" style="left:547.60px;top:215.05px;font-size:23.5px;color:#1b1b1b;font-weight:normal;letter-spacing:-0.000px">New</div>
<div class="t" style="left:97.80px;top:208.00px;font-size:28px;color:#1b1b1b;font-weight:normal;letter-spacing:0.333px">Home</div>
<div class="t" style="left:41.00px;top:305.25px;font-size:24.0px;color:#767676;font-weight:normal;letter-spacing:0.800px;-webkit-text-stroke:0.7px #767676">Pinned</div>
<div class="t" style="left:97.30px;top:369.50px;font-size:28px;color:#1b1b1b;font-weight:normal;letter-spacing:0.167px">Desktop</div>
<div class="t" style="left:97.30px;top:432.70px;font-size:28px;color:#1b1b1b;font-weight:normal;letter-spacing:0.000px">Downloads</div>
<div class="t" style="left:97.30px;top:495.90px;font-size:28px;color:#1b1b1b;font-weight:normal;letter-spacing:0.000px">Documents</div>
<div class="t" style="left:97.30px;top:560.60px;font-size:28px;color:#1b1b1b;font-weight:normal;letter-spacing:0.250px">Music</div>
<div class="t" style="left:97.30px;top:625.10px;font-size:28px;color:#1b1b1b;font-weight:normal;letter-spacing:-0.900px">Recycle Bin</div>
<div class="t" style="left:41.20px;top:721.65px;font-size:24.0px;color:#767676;font-weight:normal;letter-spacing:0.600px;-webkit-text-stroke:0.7px #767676">Drives</div>
<div class="t" style="left:98.50px;top:785.10px;font-size:28px;color:#1b1b1b;font-weight:normal;letter-spacing:-0.545px">Windows (C:)</div>
<div class="t" style="left:97.30px;top:849.40px;font-size:28px;color:#1b1b1b;font-weight:normal;letter-spacing:-0.818px">DVD Rom (D:)</div>
<div class="t" style="left:97.30px;top:915.30px;font-size:28px;color:#1b1b1b;font-weight:normal;letter-spacing:-0.750px">Projects (P:)</div>
<div class="t" style="left:41.70px;top:1013.55px;font-size:24.0px;color:#767676;font-weight:normal;letter-spacing:0.583px;-webkit-text-stroke:0.7px #767676">Cloud Storage</div>
<div class="t" style="left:97.50px;top:1077.50px;font-size:28px;color:#1b1b1b;font-weight:normal;letter-spacing:-0.286px">OneDrive</div>
<div class="t" style="left:97.30px;top:1140.60px;font-size:28px;color:#1b1b1b;font-weight:normal;letter-spacing:0.200px">iCloud</div>
<div class="t" style="left:97.50px;top:1204.80px;font-size:28px;color:#1b1b1b;font-weight:normal;letter-spacing:-0.091px">Google Drive</div>
<div class="t" style="left:40.60px;top:1301.45px;font-size:24.0px;color:#767676;font-weight:normal;letter-spacing:1.667px;-webkit-text-stroke:0.7px #767676">Network</div>
<div class="t" style="left:42.60px;top:1365.35px;font-size:24.0px;color:#767676;font-weight:normal;letter-spacing:-1.500px;-webkit-text-stroke:0.7px #767676">WSL</div>
<div class="t" style="left:42.60px;top:1429.35px;font-size:24.0px;color:#767676;font-weight:normal;letter-spacing:-0.667px;-webkit-text-stroke:0.7px #767676">Tags</div>
<div class="t" style="left:89.90px;top:1486.00px;font-size:28px;color:#1b1b1b;font-weight:normal;letter-spacing:-0.143px">Settings</div>
<div class="t" style="left:487.00px;top:1491.85px;font-size:27.5px;color:#3c3c3c;font-weight:normal;letter-spacing:-0.143px">17 items</div>
<div class="t" style="left:629.70px;top:1491.85px;font-size:27.5px;color:#3c3c3c;font-weight:normal;letter-spacing:-0.000px">1 item selected</div>
<div class="t" style="left:565.70px;top:509.50px;font-size:28px;color:#1b1b1b;font-weight:normal;letter-spacing:0.250px">Adobe</div>
<div class="t" style="left:819.60px;top:509.50px;font-size:28px;color:#1b1b1b;font-weight:normal;letter-spacing:-0.000px">Design</div>
<div class="t" style="left:1084.40px;top:508.50px;font-size:28px;color:#1b1b1b;font-weight:normal;letter-spacing:0.000px">Fonts</div>
<div class="t" style="left:1302.60px;top:509.50px;font-size:28px;color:#1b1b1b;font-weight:normal;letter-spacing:-0.500px">Project Files</div>
<div class="t" style="left:1568.40px;top:509.50px;font-size:28px;color:#1b1b1b;font-weight:normal;letter-spacing:-0.250px">Templates</div>
<div class="t" style="left:1810.90px;top:509.50px;font-size:28px;color:#1b1b1b;font-weight:normal;letter-spacing:-0.167px">Visual Studio</div>
<div class="t" style="left:507.40px;top:772.70px;font-size:28px;color:#1b1b1b;font-weight:normal;letter-spacing:-1.143px">IMG_2022_06_...</div>
<div class="t" style="left:764.20px;top:772.70px;font-size:28px;color:#1b1b1b;font-weight:normal;letter-spacing:-1.143px">IMG_2022_06_...</div>
<div class="t" style="left:1022.60px;top:772.70px;font-size:28px;color:#1b1b1b;font-weight:normal;letter-spacing:-1.143px">IMG_2022_06_...</div>
<div class="t" style="left:1282.90px;top:772.50px;font-size:28px;color:#1b1b1b;font-weight:normal;letter-spacing:-0.500px">New Text Doc...</div>
<div class="t" style="left:1527.00px;top:773.50px;font-size:28px;color:#1b1b1b;font-weight:normal;letter-spacing:0.063px">Untitled Docum...</div>
<div class="t" style="left:1782.40px;top:773.50px;font-size:28px;color:#1b1b1b;font-weight:normal;letter-spacing:-0.333px">History of Skate...</div>
<div class="t" style="left:546.00px;top:1037.20px;font-size:28px;color:#1b1b1b;font-weight:normal;letter-spacing:-0.400px">license.txt</div>
<div class="t" style="left:769.80px;top:1037.20px;font-size:28px;color:#1b1b1b;font-weight:normal;letter-spacing:-1.077px">Focus Sessions</div>
<div class="t" style="left:1007.10px;top:1037.10px;font-size:28px;color:#1b1b1b;font-weight:normal;letter-spacing:-0.333px">Untitled Spreads...</div>
<div class="t" style="left:1315.80px;top:1037.50px;font-size:28px;color:#1b1b1b;font-weight:normal;letter-spacing:-0.222px">After Dark</div>
<div class="t" style="left:1540.40px;top:1037.20px;font-size:28px;color:#1b1b1b;font-weight:normal;letter-spacing:0.143px">poppins-regu...</div>
<!-- window bottom corners -->
<svg style="left:0;top:1526px" width="12" height="12"><path d="M0,0 V12 H12 A12,12 0 0 1 0,0 Z" fill="#000"/></svg>
<svg style="left:2038px;top:1526px" width="12" height="12"><path d="M12,0 V12 H0 A12,12 0 0 0 12,0 Z" fill="#000"/></svg>
</body></html>
